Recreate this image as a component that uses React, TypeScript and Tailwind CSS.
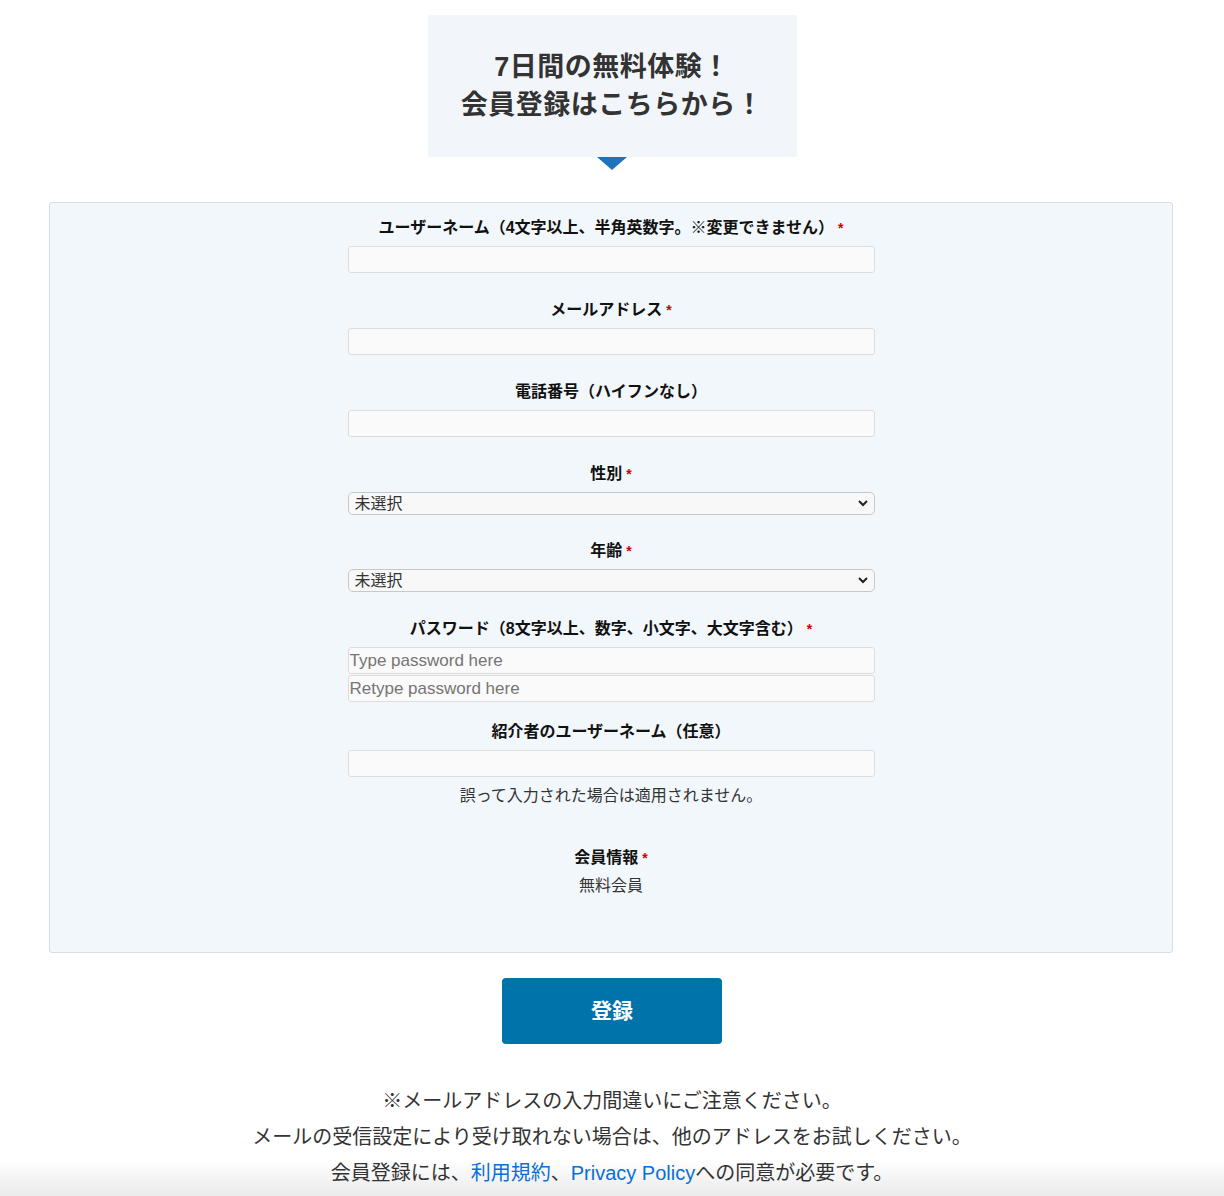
const font = "font-['Liberation_Sans','Noto_Sans_CJK_JP',sans-serif]";

function Req() {
  return <span className="ml-1 text-[#c00] text-[14px] align-top">*</span>;
}

function Label({ children, req }: { children: React.ReactNode; req?: boolean }) {
  return (
    <div className="text-center text-[16px] font-bold leading-[22px] text-[#111] mb-[7px]">
      {children}
      {req && <Req />}
    </div>
  );
}

function TextInput({ placeholder }: { placeholder?: string }) {
  return (
    <input
      type="text"
      placeholder={placeholder}
      className="block w-[527px] h-[27px] mx-auto px-[1px] border border-[#ddd] rounded-[3px] bg-[#fafafa] text-[17px] text-[#333] placeholder:text-[#757575] outline-none"
    />
  );
}

function Select() {
  return (
    <div className="relative w-[527px] h-[23px] mx-auto">
      <select className="appearance-none block w-full h-full pl-[6px] border border-[#c8c8c8] rounded-[5px] bg-[#f8f8f8] text-[16px] text-[#333] leading-[21px] outline-none">
        <option>未選択</option>
      </select>
      <svg className="absolute right-[5px] top-[6px] pointer-events-none" width="14" height="10" viewBox="0 0 14 10">
        <path d="M3 3 L7 7 L11 3" fill="none" stroke="#222" strokeWidth="2" />
      </svg>
    </div>
  );
}

export default function App() {
  return (
    <div className={`${font} min-h-[1196px] pt-[15px] text-[#333] bg-[linear-gradient(to_bottom,#fff_1160px,#eaeaea_1196px)]`}>
      <div className="flex flex-col items-center">
        <div className="w-[369px] bg-[#f2f6fa] rounded-[2px] py-[33px] text-center text-[27px] tracking-[0.5px] font-bold leading-[38px] text-[#333]">
          7日間の無料体験！<br />会員登録はこちらから！
        </div>
        <div className="w-0 h-0 border-l-[15px] border-r-[15px] border-t-[13px] border-l-transparent border-r-transparent border-t-[#1e73be]" />
      </div>

      <div className="ml-[49px] mr-[51px] mt-[32px] h-[751px] border border-[#ddd] rounded-[3px] bg-[#f2f7fb] pt-[14px]">
        <Label req>ユーザーネーム（4文字以上、半角英数字。※変更できません）</Label>
        <TextInput />

        <div className="mt-[26px]">
          <Label req>メールアドレス</Label>
          <TextInput />
        </div>

        <div className="mt-[26px]">
          <Label>電話番号（ハイフンなし）</Label>
          <TextInput />
        </div>

        <div className="mt-[26px]">
          <Label req>性別</Label>
          <Select />
        </div>

        <div className="mt-[25px]">
          <Label req>年齢</Label>
          <Select />
        </div>

        <div className="mt-[26px]">
          <Label req>パスワード（8文字以上、数字、小文字、大文字含む）</Label>
          <div className="flex flex-col gap-[1px]">
            <TextInput placeholder="Type password here" />
            <TextInput placeholder="Retype password here" />
          </div>
        </div>

        <div className="mt-[19px]">
          <Label>紹介者のユーザーネーム（任意）</Label>
          <TextInput />
          <p className="text-center text-[16px] leading-[22px] text-[#333] mt-[8px]">誤って入力された場合は適用されません。</p>
        </div>

        <div className="mt-[40px]">
          <Label req>会員情報</Label>
          <p className="text-center text-[16px] leading-[22px] text-[#333] -mt-[1px]">無料会員</p>
        </div>
      </div>

      <div className="flex justify-center mt-[25px]">
        <button className="w-[220px] h-[66px] rounded-[4px] bg-[#0073aa] text-white text-[21px] font-bold">登録</button>
      </div>

      <div className="mt-[39px] text-center text-[20px] leading-[36px] text-[#333]">
        <p>※メールアドレスの入力間違いにご注意ください。</p>
        <p>メールの受信設定により受け取れない場合は、他のアドレスをお試しください。</p>
        <p>
          会員登録には、<a className="text-[#0a6fd6]">利用規約</a>、<a className="text-[#0a6fd6]">Privacy Policy</a>への同意が必要です。
        </p>
      </div>
    </div>
  );
}
